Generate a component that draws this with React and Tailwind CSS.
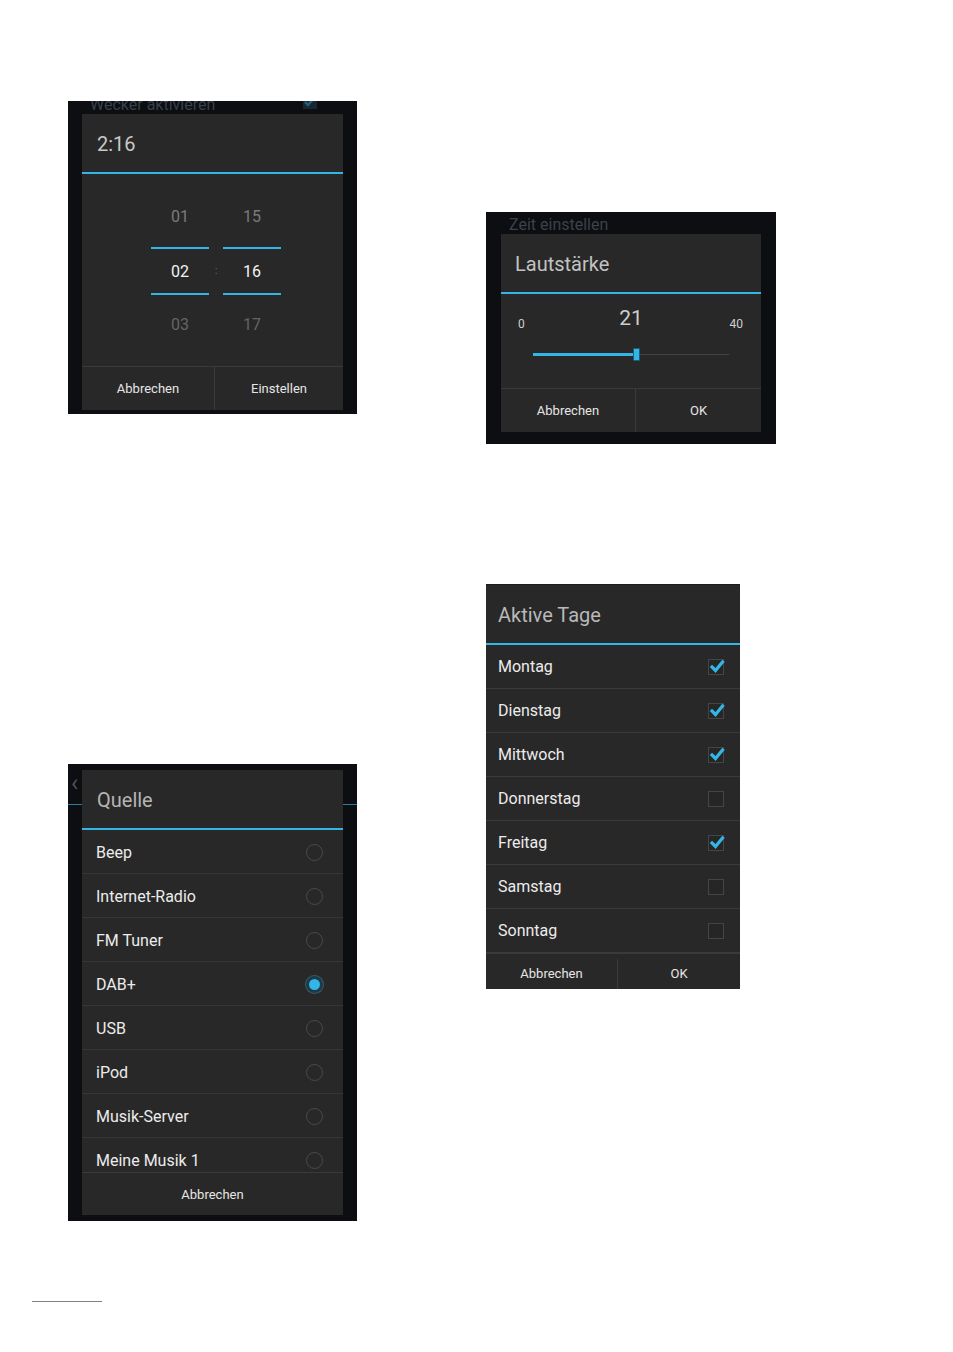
import React from 'react'

const font = { fontFamily: 'Roboto, "Liberation Sans", sans-serif' }

const ButtonBar = ({ items, h = 'h-[44px]', split = 'w-[133px]', pt = '' }) => (
  <div className={`flex border-t border-[#3a3a3a] ${h} ${pt}`}>
    {items.length === 1 ? (
      <div className="flex-1 flex items-center justify-center text-[13px] text-[#e6e6e6]">
        {items[0]}
      </div>
    ) : (
      <>
        <div
          className={`${split} flex items-center justify-center text-[13px] text-[#e6e6e6] border-r border-[#3a3a3a]`}
        >
          {items[0]}
        </div>
        <div className="flex-1 flex items-center justify-center text-[13px] text-[#e6e6e6]">
          {items[1]}
        </div>
      </>
    )}
  </div>
)

const TitleBar = ({ text, color = 'text-[#bdbdbd]', pl = 'pl-[15px]' }) => (
  <div className="flex flex-col">
    <div className={`h-[58px] flex items-center pt-[2px] ${pl} text-[20px] ${color}`}>
      {text}
    </div>
    <div className="h-[2px] bg-[#33b5e5]" />
  </div>
)

const Check = ({ on }) => (
  <div className="relative w-[16px] h-[16px] border border-[#454545] bg-[#262626]">
    {on && (
      <svg
        viewBox="0 0 16 16"
        className="absolute left-0 -top-[1px] w-[16px] h-[16px] overflow-visible"
      >
        <path
          d="M3 8 L6.5 11.5 L13.5 3"
          fill="none"
          stroke="#33b5e5"
          strokeWidth="3.2"
          strokeLinecap="square"
        />
      </svg>
    )}
  </div>
)

const Radio = ({ on }) =>
  on ? (
    <div className="w-[17px] h-[17px] rounded-full border-[3px] border-[#1c3a48] bg-[#33b5e5] shadow-[0_0_0_1px_#3c5866]" />
  ) : (
    <div className="w-[17px] h-[17px] rounded-full border-[1.5px] border-[#4a4a4a]" />
  )

const PickCol = ({ a, b, c }) => (
  <div className="w-[58px] flex flex-col items-center">
    <div className="h-[46px] flex items-center pt-[2px] text-[16px] text-[#7b7b7b]">{a}</div>
    <div className="mt-[8px] h-[2px] w-full bg-[#33b5e5]" />
    <div className="h-[44px] flex items-center pt-[1px] text-[16px] text-[#f2f2f2]">{b}</div>
    <div className="h-[2px] w-full bg-[#33b5e5]" />
    <div className="mt-[6px] h-[46px] flex items-center pt-[2px] text-[16px] text-[#646464]">{c}</div>
  </div>
)

const TimePicker = () => (
  <div className="w-[289px] h-[313px] bg-[#0c0e11] flex flex-col px-[14px] pb-[4px]">
    <div className="h-[13px] overflow-hidden flex justify-between pl-[8px] pr-[26px]">
      <span className="text-[16px] leading-[16px] -mt-[4px] text-[#39404a]">
        Wecker aktivieren
      </span>
      <svg viewBox="0 0 14 14" className="w-[14px] h-[14px] -mt-[6px]">
        <rect x="0" y="0" width="14" height="14" fill="#1a2630" />
        <path d="M2 7 L5 10 L12 2" fill="none" stroke="#1f5f7a" strokeWidth="2.5" />
      </svg>
    </div>
    <div className="flex-1 bg-[#282828] flex flex-col">
      <TitleBar text="2:16" color="text-[#c8c8c8]" />
      <div className="flex-1 flex justify-center pl-[7px] pt-[19px]">
        <PickCol a="01" b="02" c="03" />
        <div className="w-[14px] flex flex-col items-center">
          <div className="mt-[56px] h-[44px] flex items-center text-[11px] text-[#6a6a6a]">:</div>
        </div>
        <PickCol a="15" b="16" c="17" />
      </div>
      <ButtonBar items={['Abbrechen', 'Einstellen']} />
    </div>
  </div>
)

const Volume = () => (
  <div className="w-[290px] h-[232px] bg-[#0c0e11] flex flex-col px-[15px] pb-[12px]">
    <div className="h-[22px] overflow-hidden pl-[8px]">
      <span className="block text-[16px] leading-[16px] mt-[5px] text-[#3c424b]">
        Zeit einstellen
      </span>
    </div>
    <div className="flex-1 bg-[#282828] flex flex-col">
      <TitleBar text="Lautstärke" pl="pl-[14px]" color="text-[#c2c2c2]" />
      <div className="flex-1 flex flex-col px-[18px]">
        <div className="flex items-end justify-between h-[40px]">
          <span className="text-[12px] text-[#cfcfcf] -ml-[1px] mb-[1px]">0</span>
          <span className="text-[21px] text-[#cdcdcd] leading-[21px] mb-[5px] ml-[8px]">21</span>
          <span className="text-[12px] text-[#cfcfcf] mb-[1px]">40</span>
        </div>
        <div className="flex items-center h-[40px] pl-[14px] pr-[14px]">
          <div className="w-[100px] h-[3px] bg-[#33b5e5]" />
          <div className="w-[7px] h-[13px] bg-[#33b5e5] border border-[#1d5c78] rounded-[1px]" />
          <div className="flex-1 h-[1px] bg-[#444444]" />
        </div>
      </div>
      <ButtonBar items={['Abbrechen', 'OK']} split="w-[135px]" />
    </div>
  </div>
)

const days = [
  ['Montag', true],
  ['Dienstag', true],
  ['Mittwoch', true],
  ['Donnerstag', false],
  ['Freitag', true],
  ['Samstag', false],
  ['Sonntag', false],
]

const Days = () => (
  <div className="w-[254px] h-[405px] bg-[#282828] flex flex-col border-t border-[#1c1c1c]">
    <TitleBar text="Aktive Tage" pl="pl-[12px]" color="text-[#b9b9b9]" />
    {days.map(([d, on]) => (
      <div
        key={d}
        className="h-[44px] flex items-center justify-between pl-[12px] pr-[16px] border-b border-[#3a3a3a]"
      >
        <span className="text-[16px] text-[#ececec]">{d}</span>
        <Check on={on} />
      </div>
    ))}
    <ButtonBar items={['Abbrechen', 'OK']} h="flex-1" split="w-[132px]" pt="pt-[5px]" />
  </div>
)

const sources = [
  ['Beep', false],
  ['Internet-Radio', false],
  ['FM Tuner', false],
  ['DAB+', true],
  ['USB', false],
  ['iPod', false],
  ['Musik-Server', false],
  ['Meine Musik 1', false],
]

const Source = () => (
  <div className="relative w-[289px] h-[457px] bg-[#0c0e11] flex flex-col px-[14px] pt-[6px] pb-[6px]">
    <div className="absolute left-0 right-0 top-[40px] h-[1px] bg-[#2a7fa0]" />
    <span className="absolute left-[3px] top-[4px] text-[24px] leading-[30px] text-[#4d535b]">‹</span>
    <div className="relative flex-1 bg-[#282828] flex flex-col">
      <TitleBar text="Quelle" color="text-[#b5b5b5]" />
      <div className="h-[342px] overflow-hidden flex flex-col">
        {sources.map(([s, on]) => (
          <div
            key={s}
            className="h-[44px] shrink-0 flex items-center justify-between pt-[2px] pl-[14px] pr-[20px] border-b border-[#363636]"
          >
            <span className="text-[16px] text-[#ececec]">{s}</span>
            <Radio on={on} />
          </div>
        ))}
      </div>
      <ButtonBar items={['Abbrechen']} h="flex-1" pt="pt-[1px]" />
    </div>
  </div>
)

export default function App() {
  return (
    <div className="w-[953px] h-[1352px] bg-white flex flex-col" style={font}>
      <div className="flex pl-[68px]">
        <div className="flex flex-col pt-[101px]">
          <TimePicker />
          <div className="mt-[350px]">
            <Source />
          </div>
        </div>
        <div className="flex flex-col ml-[129px] pt-[212px]">
          <Volume />
          <div className="mt-[140px]">
            <Days />
          </div>
        </div>
      </div>
      <div className="mt-[80px] ml-[32px] w-[70px] h-[1px] bg-[#808080]" />
    </div>
  )
}
